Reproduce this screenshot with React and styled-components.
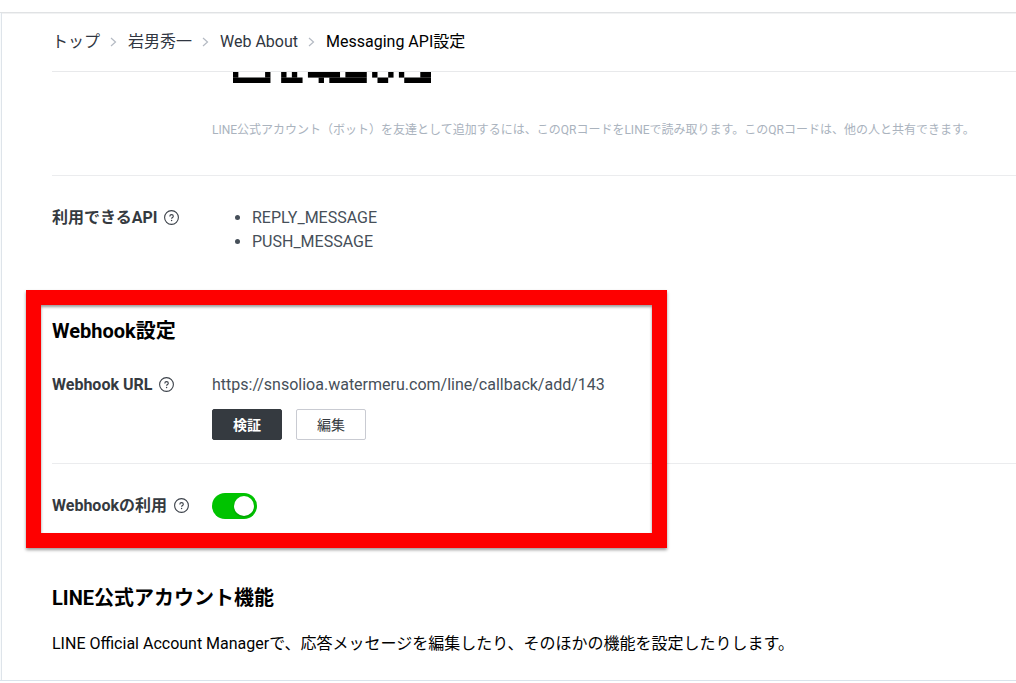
import React from "react";
import styled, { createGlobalStyle } from "styled-components";

const GlobalStyle = createGlobalStyle`
  *, *::before, *::after { box-sizing: border-box; }
  body {
    margin: 0;
    background: #fff;
    color: #000;
    font: 16px/24px Roboto, "Noto Sans CJK JP", sans-serif;
  }
  h2, p, ul, ol, dl, dt, dd { margin: 0; padding: 0; }
`;

const Page = styled.div`
  display: flex;
  margin-top: 12px;
  border-top: 1px solid #e0e2e4;
  border-bottom: 1px solid #d9e3eb;
  box-shadow: inset 0 1px 0 #f1f2f3;
`;

const SideEdge = styled.div`
  flex: none;
  width: 2px;
  border-right: 1px solid #dee4ea;
  background: #f9fbfc;
`;

const Main = styled.main`
  flex: 1;
  min-width: 0;
  padding-left: 50px;
`;

const Breadcrumb = styled.ol`
  display: flex;
  align-items: center;
  gap: 8px;
  padding: 17px 0;
  border-bottom: 1px solid #e8e9eb;
  list-style: none;
`;

const Crumb = styled.li`
  display: flex;
  align-items: center;
  gap: 8px;
  color: ${(p) => (p.$current ? "#000" : "#303641")};
`;

const CrumbLink = styled.a`
  color: inherit;
  text-decoration: none;
`;

const Row = styled.section`
  display: flex;
  align-items: ${(p) => (p.$center ? "center" : "flex-start")};
  padding: ${(p) => p.$pad || "0"};
  border-bottom: ${(p) => (p.$line ? "1px solid #ebecee" : "0")};
`;

const Label = styled.div`
  flex: none;
  display: flex;
  align-items: center;
  gap: 7px;
  width: 160px;
  height: 24px;
  color: #353a40;
  font-weight: 700;
  white-space: nowrap;
`;

const Value = styled.div`
  flex: 1;
  min-width: 0;
  color: #464f59;
`;

const QrStrip = styled.svg`
  display: block;
  width: 198px;
  height: 11px;
  margin-left: 21px;
`;

const Note = styled.p`
  margin-top: 37px;
  color: #aab3be;
  font-size: 12px;
  line-height: 20px;
`;

const ApiList = styled.ul`
  padding-left: 40px;
`;

const HelpButton = styled.button`
  display: flex;
  padding: 0;
  border: 0;
  background: none;
  color: #3c424a;
  cursor: pointer;
`;

const Highlighted = styled.div`
  position: relative;
  padding-top: 27px;
`;

const HighlightFrame = styled.div`
  position: absolute;
  top: 0;
  left: -26px;
  width: 641px;
  height: 258px;
  border: 15px solid #fe0000;
  box-shadow: 0 2px 3px rgba(0, 0, 0, 0.4), inset 0 2px 3px rgba(0, 0, 0, 0.4);
  pointer-events: none;
`;

const Title = styled.h2`
  font-size: 20px;
  font-weight: 700;
  line-height: 28px;
`;

const Actions = styled.div`
  display: flex;
  gap: 14px;
  margin-top: 12px;
`;

const Button = styled.button`
  height: 31px;
  padding: 0 20px;
  border: 1px solid ${(p) => (p.$primary ? "#353a40" : "#c9cbd2")};
  border-radius: 2px;
  background: ${(p) => (p.$primary ? "#353a40" : "#fff")};
  color: ${(p) => (p.$primary ? "#fff" : "#353a40")};
  font-family: inherit;
  font-size: 14px;
  font-weight: ${(p) => (p.$primary ? 700 : 400)};
  line-height: 20px;
`;

const Toggle = styled.input`
  appearance: none;
  display: block;
  width: 45px;
  height: 26px;
  margin: 0;
  padding: 3px;
  border-radius: 13px;
  background: #b7bcc3;

  &::before {
    content: "";
    display: block;
    width: 20px;
    height: 20px;
    border-radius: 50%;
    background: #fff;
    box-shadow: 0 1px 2px rgba(0, 0, 0, 0.25);
  }
  &:checked { background: #00c300; }
  &:checked::before { margin-left: 19px; }
`;

const Footer = styled.section`
  padding: 65px 0 24px;
`;

const Lead = styled.p`
  margin-top: 20px;
`;

const Chevron = () => (
  <svg width="12" height="24" viewBox="0 0 12 24" fill="none" stroke="#b4bac3" strokeWidth="1.2" aria-hidden="true">
    <path d="M3 8l4.5 4L3 16" />
  </svg>
);

const Help = ({ topic }) => (
  <HelpButton type="button" aria-label={`${topic} ヘルプ`}>
    <svg width="15" height="16" viewBox="0 0 15 16" fill="none" stroke="currentColor">
      <circle cx="7.5" cy="7.5" r="6.9" strokeWidth="1.1" />
      <path d="M5.8 6.4c0-1.2.7-1.8 1.8-1.8s1.7.7 1.7 1.6c0 1.3-1.7 1.3-1.7 2.6" strokeWidth="1.1" />
      <circle cx="7.6" cy="10.5" r=".7" fill="currentColor" stroke="none" />
    </svg>
  </HelpButton>
);

// [row, first module, module count]
const QR_RUNS = [
  [0, 0, 1], [0, 6, 1], [0, 9, 1], [0, 11, 1], [0, 14, 6], [0, 21, 4],
  [0, 26, 1], [0, 29, 1], [0, 31, 1], [0, 35, 2],
  [1, 0, 7], [1, 9, 4], [1, 16, 1], [1, 18, 7], [1, 27, 2], [1, 32, 5],
];

const CRUMBS = ["トップ", "岩男秀一", "Web About"];

export default function App() {
  return (
    <>
      <GlobalStyle />
      <Page lang="ja">
        <SideEdge />
        <Main>
          <nav>
            <Breadcrumb>
              {CRUMBS.map((name) => (
                <Crumb key={name}>
                  <CrumbLink href="#">{name}</CrumbLink>
                  <Chevron />
                </Crumb>
              ))}
              <Crumb $current aria-current="page">Messaging API設定</Crumb>
            </Breadcrumb>
          </nav>

          <Row $line $pad="0 0 35px">
            <Label />
            <Value>
              <QrStrip viewBox="0 0 37 2" preserveAspectRatio="none" role="img" aria-label="QRコード">
                {QR_RUNS.map(([row, x, n]) => (
                  <rect key={`${row}-${x}`} x={x} y={row} width={n} height="1.02" />
                ))}
              </QrStrip>
              <Note>
                LINE公式アカウント（ボット）を友達として追加するには、このQRコードをLINEで読み取ります。このQRコードは、他の人と共有できます。
              </Note>
            </Value>
          </Row>

          <Row $pad="30px 0 36px">
            <Label>利用できるAPI<Help topic="利用できるAPI" /></Label>
            <Value>
              <ApiList>
                <li>REPLY_MESSAGE</li>
                <li>PUSH_MESSAGE</li>
              </ApiList>
            </Value>
          </Row>

          <Highlighted>
            <Title>Webhook設定</Title>
            <Row $line $pad="28px 0 23px">
              <Label>Webhook URL<Help topic="Webhook URL" /></Label>
              <Value>
                https://snsolioa.watermeru.com/line/callback/add/143
                <Actions>
                  <Button type="button" $primary>検証</Button>
                  <Button type="button">編集</Button>
                </Actions>
              </Value>
            </Row>
            <Row $center $pad="29px 0 0">
              <Label>
                <label htmlFor="use-webhook">Webhookの利用</label>
                <Help topic="Webhookの利用" />
              </Label>
              <Value>
                <Toggle id="use-webhook" type="checkbox" role="switch" defaultChecked />
              </Value>
            </Row>
            <HighlightFrame />
          </Highlighted>

          <Footer>
            <Title>LINE公式アカウント機能</Title>
            <Lead>LINE Official Account Managerで、応答メッセージを編集したり、そのほかの機能を設定したりします。</Lead>
          </Footer>
        </Main>
      </Page>
    </>
  );
}
